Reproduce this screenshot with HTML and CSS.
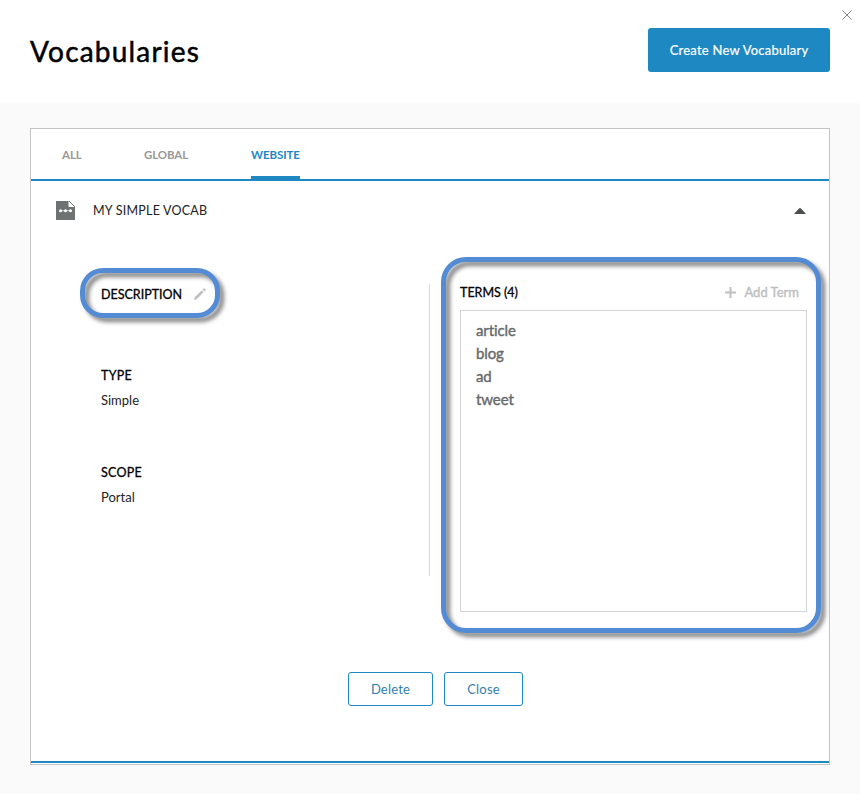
FILE: index.html
```html
<!DOCTYPE html>
<html lang="en">
<head>
<meta charset="utf-8">
<title>Vocabularies</title>
<link rel="stylesheet" href="styles.css">
</head>
<body>
<header class="header">
  <h1 class="title">Vocabularies</h1>
  <button class="create">Create New Vocabulary</button>
  <svg class="dismiss" width="10" height="10" viewBox="0 0 10 10"><path d="M.4.4l9.2 9.2M9.6.4L.4 9.6" stroke="#777" stroke-width=".9"/></svg>
</header>
<main class="panel">
  <nav class="tabs">
    <a class="tab tab-all">ALL</a>
    <a class="tab tab-global">GLOBAL</a>
    <a class="tab tab-website">WEBSITE</a>
  </nav>
  <div class="vocab">
    <svg class="file" width="19" height="19" viewBox="0 0 19 19"><path d="M0 0h12.5v6H19v13H0z" fill="#6f7273"/><path d="M13.7.2L18.8 5h-5.1z" fill="#fff"/><path d="M13 0l6 6" stroke="#6f7273"/><path d="M4 9.7h11" stroke="#fff" stroke-width=".7"/><g fill="#fff"><circle cx="4.5" cy="9.7" r="1.5"/><circle cx="9.5" cy="9.7" r="1.5"/><circle cx="14.5" cy="9.7" r="1.5"/></g></svg>
    <span class="name">MY SIMPLE VOCAB</span>
    <svg class="caret" width="12" height="6" viewBox="0 0 12 6"><path d="M0 6l5-5.5q1-.9 2 0L12 6z" fill="#4b4f4f"/></svg>
  </div>
  <div class="details">
    <section class="info">
      <div class="description"><span class="label">DESCRIPTION</span>
        <svg class="pencil" width="12" height="12" viewBox="0 0 12 12"><path d="M0 12l.7-2.7 7-7 2 2-7 7zM8.4 1.6L9.6.4q.5-.5 1 0l1 1q.5.5 0 1l-1.2 1.2z" fill="#c1c1c1"/></svg>
        <i class="callout"></i>
      </div>
      <div class="field"><div class="label wide">TYPE</div><div class="value">Simple</div></div>
      <div class="field"><div class="label wide">SCOPE</div><div class="value">Portal</div></div>
    </section>
    <section class="terms">
      <div class="terms-head"><span class="label">TERMS (4)</span>
        <a class="add"><svg width="11" height="11" viewBox="0 0 11 11"><path d="M5.5 0v11M0 5.5h11" stroke="#bfbfbf" stroke-width="2"/></svg><span>Add Term</span></a>
      </div>
      <ul class="list"><li>article</li><li>blog</li><li>ad</li><li>tweet</li></ul>
      <i class="callout"></i>
    </section>
  </div>
  <footer class="actions"><button class="delete">Delete</button><button class="close">Close</button></footer>
</main>
</body>
</html>
```
FILE: styles.css
```css
* { box-sizing: border-box; }
body { margin: 0; height: 794px; background: #fafafa; color: #000; font: 13px/20px Lato, "Liberation Sans", sans-serif; font-variant-ligatures: none; overflow: hidden; }
button { font: inherit; padding: 0; border-radius: 3px; }
.header { position: relative; display: flex; justify-content: space-between; align-items: flex-start; height: 103px; padding: 28px 30px 0; background: #fff; }
.title { margin: 0; font: 400 28px/46px Lato, sans-serif; letter-spacing: 1.2px; -webkit-text-stroke: .5px #000; }
.create { width: 182px; height: 44px; border: 0; background: #1e88c3; color: #fff; letter-spacing: .23px; padding-bottom: 1px; -webkit-text-stroke: .2px #fff; }
.dismiss { position: absolute; left: 842px; top: 10px; }
.panel { height: 637px; margin: 25px 30px 0; border: 1px solid #c4c4c4; background: #fff; padding-bottom: 1px; display: flex; flex-direction: column; }
.tabs { display: flex; height: 52px; flex: none; padding-left: 31px; border-bottom: 2px solid #1e88c3; }
.tab { height: 52px; padding-top: 16px; font-size: 11.5px; font-weight: 700; letter-spacing: -.1px; color: #999; white-space: nowrap; }
.tab-all { width: 82px; }
.tab-global { width: 107px; }
.tab-website { width: 49px; color: #1e88c3; border-bottom: 5px solid #1e88c3; }
.vocab { display: flex; align-items: center; height: 59px; padding: 0 23px 0 25px; }
.name { margin-left: 18px; flex: 1; color: #222; font-size: 12.5px; letter-spacing: .22px; }
.caret { margin-top: 1px; }
.details { display: flex; height: 292px; margin-top: 44px; padding-left: 70px; }
.info { width: 329px; border-right: 1px solid #d9d9d9; }
.description, .terms-head { position: relative; display: flex; align-items: center; }
.label { position: relative; top: 1px; color: #000; line-height: 20px; -webkit-text-stroke: .3px #000; font-size: 12.5px; white-space: nowrap; }
.wide { letter-spacing: .25px; }
.description { height: 20px; }
.pencil { margin-left: auto; margin-right: 223px; }
.description .callout { left: -21px; top: -16px; width: 140px; height: 50px; border-radius: 23px; }
.callout { position: absolute; border: 5px solid #538bd4; filter: drop-shadow(4px 4px 2px rgba(0,0,0,.5)); pointer-events: none; }
.field { height: 97px; }
.description + .field { margin-top: 61px; }
.value { margin-top: 5px; color: #222; }
.terms { position: relative; width: 347px; margin-left: 30px; height: 328px; }
.terms-head { height: 26px; padding: 0 8px 10px 0; justify-content: space-between; }
.add { display: flex; align-items: center; gap: 8px; color: #bfbfbf; -webkit-text-stroke: .4px #bfbfbf; }
.list { list-style: none; margin: 0; padding: 8px 15px; height: 302px; border: 1px solid #d3d5d5; color: #68696a; font-size: 15px; line-height: 23px; letter-spacing: -.1px; -webkit-text-stroke: .4px #68696a; }
.terms .callout { left: -19px; top: -27px; width: 380px; height: 376px; border-radius: 25px; }
.actions { display: flex; justify-content: center; align-items: flex-start; gap: 11px; flex: 1; padding: 96px 0 0 11px; border-bottom: 2px solid #1e88c3; }
.actions button { height: 34px; border: 1px solid #1e88c3; background: #fff; color: #327fae; letter-spacing: .2px; }
.delete { width: 85px; }
.close { width: 79px; }
```
